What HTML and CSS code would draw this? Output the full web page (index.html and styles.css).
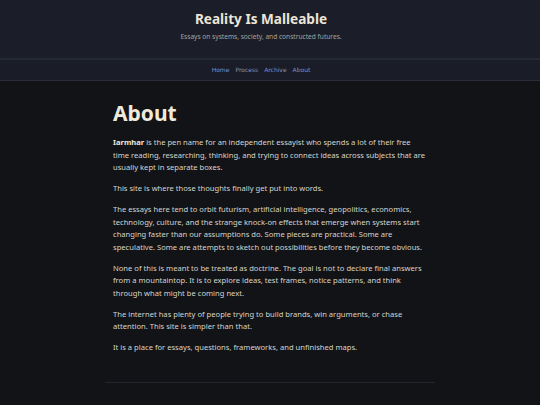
FILE: index.html
```html
<!DOCTYPE html>
<html lang="en">
<head>
<meta charset="utf-8">
<title>About – Reality Is Malleable</title>
<link rel="stylesheet" href="styles.css">
</head>
<body>
<header class="site-header">
  <h1 class="site-title">Reality Is Malleable</h1>
  <p class="site-tagline">Essays on systems, society, and constructed futures.</p>
</header>
<nav class="site-nav">
  <a href="#">Home</a>
  <a href="#">Process</a>
  <a href="#">Archive</a>
  <a href="#">About</a>
</nav>
<main class="page">
  <h2 class="page-title">About</h2>
  <p><strong>Iarmhar</strong> is the pen name for an independent essayist who spends a lot of their free time reading, researching, thinking, and trying to connect ideas across subjects that are usually kept in separate boxes.</p>
  <p>This site is where those thoughts finally get put into words.</p>
  <p>The essays here tend to orbit futurism, artificial intelligence, geopolitics, economics, technology, culture, and the strange knock-on effects that emerge when systems start changing faster than our assumptions do. Some pieces are practical. Some are speculative. Some are attempts to sketch out possibilities before they become obvious.</p>
  <p>None of this is meant to be treated as doctrine. The goal is not to declare final answers from a mountaintop. It is to explore ideas, test frames, notice patterns, and think through what might be coming next.</p>
  <p>The internet has plenty of people trying to build brands, win arguments, or chase attention. This site is simpler than that.</p>
  <p>It is a place for essays, questions, frameworks, and unfinished maps.</p>
  <hr class="rule">
</main>
</body>
</html>
```
FILE: styles.css
```css
html, body {
  margin: 0;
  padding: 0;
  background: #121317;
}
body {
  font-family: "Noto Sans", "Open Sans", sans-serif;
  color: #d6d3cc;
}
.site-header {
  background: #1b1e29;
  text-align: center;
  padding: 9px 18px 16px 0;
  border-bottom: 2px solid #252936;
}
.site-title {
  margin: 0;
  font-size: 13.6px;
  font-weight: 700;
  color: #ebe5d8;
  line-height: 20px;
}
.site-tagline {
  margin: 3px 0 0;
  font-size: 6.6px;
  color: #a5a39e;
  line-height: 10px;
}
.site-nav {
  background: #1a1c27;
  display: flex;
  justify-content: center;
  gap: 6px;
  padding: 5px 18px 5px 0;
  border-bottom: 1px solid #2a2d39;
  font-size: 6px;
  line-height: 10px;
  font-family: "DejaVu Sans", sans-serif;
}
.site-nav a {
  color: #7f92c0;
  text-decoration: none;
  font-weight: 500;
}
.page {
  width: 314px;
  margin: 0 auto;
  padding: 17px 0 0;
  font-size: 7.6px;
  line-height: 12.7px;
}
.page-title {
  margin: 0 0 8px;
  font-size: 21px;
  line-height: 30px;
  font-weight: 700;
  color: #f0eadd;
}
.page p {
  margin: 0 0 8px;
}
.page strong {
  color: #ece6da;
}
.rule {
  border: 0;
  border-top: 1px solid #22252d;
  margin: 28px -8px 0;
}
```
